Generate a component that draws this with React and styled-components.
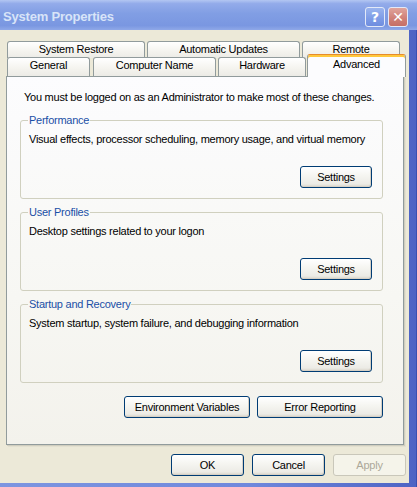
import React from "react";
import styled, { createGlobalStyle } from "styled-components";

const GlobalStyle = createGlobalStyle`
  html, body {
    margin: 0;
    padding: 0;
    background: #ece9d8;
  }
  * {
    box-sizing: border-box;
  }
`;

const Window = styled.div`
  width: 417px;
  height: 487px;
  display: flex;
  flex-direction: column;
  font-family: "Liberation Sans", Arial, sans-serif;
  font-size: 11px;
  letter-spacing: -0.25px;
  color: #000;
  background: linear-gradient(90deg, #7d95e0 0%, #6f88dc 60%, #4d63c4 100%);
  box-shadow: inset -1px 0 0 #3a4fb0;
`;

const TitleBar = styled.div`
  height: 30px;
  flex-shrink: 0;
  display: flex;
  align-items: center;
  padding: 0 9px 0 3px;
  background: linear-gradient(
    180deg,
    #b3c6f2 0%,
    #93abea 12%,
    #819ee4 45%,
    #7a97e1 85%,
    #8fa8e8 100%
  );
`;

const Title = styled.span`
  font-weight: bold;
  font-size: 13px;
  color: #d8e4f8;
  letter-spacing: -0.2px;
  padding-top: 3px;
`;

const CaptionButtons = styled.div`
  margin-left: auto;
  display: flex;
  gap: 3px;
  padding-top: 4px;
`;

const CaptionButton = styled.div`
  width: 20px;
  height: 20px;
  border: 1px solid #e3e9f8;
  border-radius: 3px;
  display: flex;
  align-items: center;
  justify-content: center;
  color: #fff;
  font-family: "DejaVu Sans", sans-serif;
  font-weight: bold;
  font-size: 14px;
  letter-spacing: 0;
  background: ${(p) =>
    p.$close
      ? "linear-gradient(180deg, #e0a49c 0%, #cf7f76 60%, #c56f66 100%)"
      : "linear-gradient(180deg, #9ab4ee 0%, #7d9be6 60%, #6f8ddf 100%)"};
`;

const Frame = styled.div`
  flex: 1;
  display: flex;
  padding: 0 9px 4px 0;
`;

const Body = styled.div`
  flex: 1;
  background: #ece9d8;
  display: flex;
  flex-direction: column;
  padding: 11px 3px 0 6px;
`;

const TabStrip = styled.div`
  display: flex;
  flex-direction: column;
  padding-left: 1px;
`;

const TabRow = styled.div`
  display: flex;
  align-items: flex-end;
  gap: ${(p) => p.$gap || 2}px;
  height: ${(p) => p.$height}px;
  margin-top: ${(p) => p.$offset || 0}px;
  position: relative;
  z-index: ${(p) => p.$layer || 0};
`;

const Tab = styled.div`
  width: ${(p) => p.$width}px;
  height: ${(p) => p.$height}px;
  border: 1px solid #919b9c;
  border-bottom: none;
  border-radius: 3px 3px 0 0;
  background: linear-gradient(180deg, #ffffff 0%, #f4f3ee 60%, #ecebe6 100%);
  display: flex;
  justify-content: center;
  padding-top: 1px;
  white-space: nowrap;
`;

const ActiveTab = styled(Tab)`
  height: 23px;
  margin-bottom: -1px;
  margin-left: -1px;
  border-top: 1px solid #e68b2c;
  box-shadow: inset 0 2px 0 #ffc83c;
  background: #fcfcfe;
  padding-top: 3px;
  position: relative;
  z-index: 3;
`;

const Panel = styled.div`
  position: relative;
  z-index: 1;
  width: 398px;
  height: 369px;
  border: 1px solid #919b9c;
  box-shadow: 1px 1px 0 #d0cebf, 2px 2px 0 #e3e0d0;
  background: linear-gradient(180deg, #fcfcfe 0%, #f7f7f3 60%, #f3f2ec 100%);
  display: flex;
  flex-direction: column;
  padding: 14px 20px 0 13px;
`;

const Notice = styled.p`
  margin: 0 0 10px 4px;
  line-height: 13px;
  white-space: nowrap;
`;

const Group = styled.fieldset`
  margin: 0;
  height: 85px;
  border: 1px solid #d0d0bf;
  border-radius: 3px;
  padding: 6px 10px 10px 8px;
  display: flex;
  flex-direction: column;
  & + & {
    margin-top: 7px;
  }
`;

const GroupLabel = styled.legend`
  color: #1a4fa6;
  padding: 0 1px;
  margin-left: -1px;
  line-height: 13px;
`;

const Description = styled.div`
  line-height: 13px;
  white-space: nowrap;
`;

const ButtonRow = styled.div`
  display: flex;
  justify-content: flex-end;
  gap: ${(p) => p.$gap || 8}px;
  margin-top: ${(p) => p.$top || 0}px;
`;

const Button = styled.button`
  width: ${(p) => p.$width || 73}px;
  height: 22px;
  padding: 0;
  font-family: "Liberation Sans", Arial, sans-serif;
  font-size: 11px;
  letter-spacing: -0.25px;
  color: #000;
  border: 1px solid #003c74;
  border-radius: 3px;
  background: linear-gradient(
    180deg,
    #ffffff 0%,
    #f6f6f2 40%,
    #ecebe5 85%,
    #d8d3c8 100%
  );
  box-shadow: inset -1px -1px 0 #d6d0c5;

  &:disabled {
    color: #aca899;
    border-color: #c9c7ba;
    background: #f5f4ea;
    box-shadow: none;
  }
`;

const DialogButtons = styled(ButtonRow)`
  margin-top: 9px;
`;

const groups = [
  {
    label: "Performance",
    text: "Visual effects, processor scheduling, memory usage, and virtual memory",
  },
  { label: "User Profiles", text: "Desktop settings related to your logon" },
  {
    label: "Startup and Recovery",
    text: "System startup, system failure, and debugging information",
  },
];

const App = () => {
  return (
    <>
      <GlobalStyle />
      <Window>
        <TitleBar>
          <Title>System Properties</Title>
          <CaptionButtons>
            <CaptionButton>?</CaptionButton>
            <CaptionButton $close>✕</CaptionButton>
          </CaptionButtons>
        </TitleBar>
        <Frame>
          <Body>
            <TabStrip>
              <TabRow $height={17}>
                <Tab $width={138} $height={17}>System Restore</Tab>
                <Tab $width={153} $height={17}>Automatic Updates</Tab>
                <Tab $width={98} $height={17}>Remote</Tab>
              </TabRow>
              <TabRow $height={19} $offset={-1} $layer={2}>
                <Tab $width={83} $height={19}>General</Tab>
                <Tab $width={123} $height={19} style={{ marginLeft: 1 }}>
                  Computer Name
                </Tab>
                <Tab $width={88} $height={19}>Hardware</Tab>
                <ActiveTab $width={99}>Advanced</ActiveTab>
              </TabRow>
            </TabStrip>
            <Panel>
              <Notice>
                You must be logged on as an Administrator to make most of these
                changes.
              </Notice>
              {groups.map((g) => (
                <Group key={g.label}>
                  <GroupLabel>{g.label}</GroupLabel>
                  <Description>{g.text}</Description>
                  <ButtonRow $top={20}>
                    <Button $width={72}>Settings</Button>
                  </ButtonRow>
                </Group>
              ))}
              <ButtonRow $top={13} $gap={7}>
                <Button $width={126}>Environment Variables</Button>
                <Button $width={126}>Error Reporting</Button>
              </ButtonRow>
            </Panel>
            <DialogButtons $gap={8}>
              <Button>OK</Button>
              <Button>Cancel</Button>
              <Button disabled>Apply</Button>
            </DialogButtons>
          </Body>
        </Frame>
      </Window>
    </>
  );
};

export default App;
